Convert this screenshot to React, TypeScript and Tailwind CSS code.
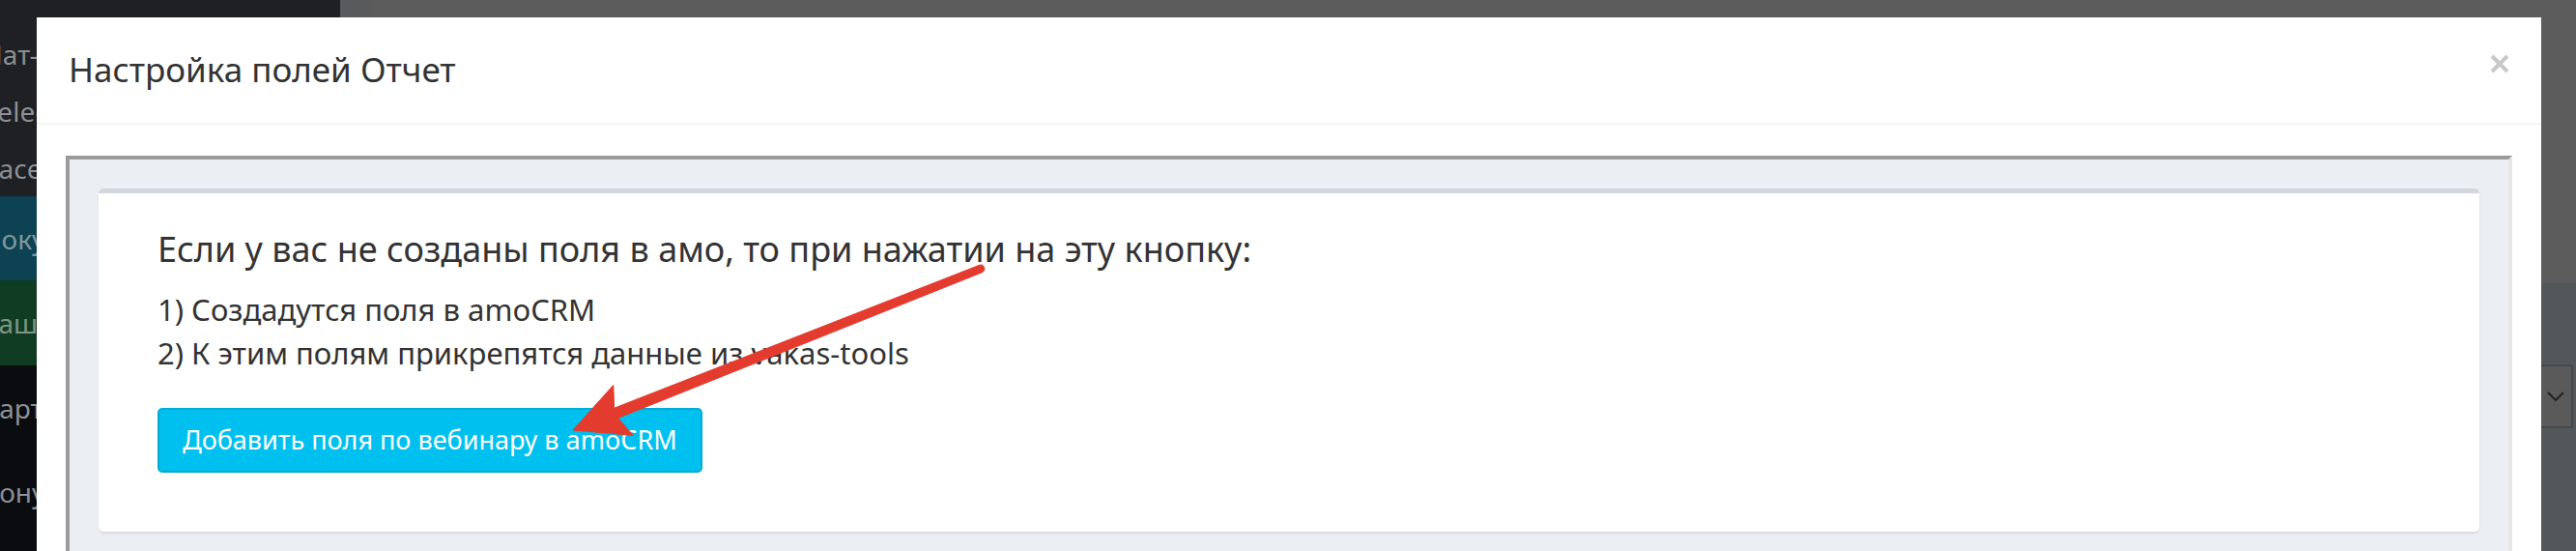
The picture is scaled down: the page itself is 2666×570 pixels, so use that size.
import React from 'react'

const sidebarTop = [
  { label: 'main', shift: '-ml-[2px]' },
  { label: 'Чат-боты', shift: '-ml-[16px]' },
  { label: 'Selector', shift: '-ml-[18px]' },
  { label: 'Facebook', shift: '-ml-[16px]' },
]

function Sidebar() {
  return (
    <aside className="flex w-[352px] shrink-0 flex-col bg-[#1e2024] text-[28px] text-[#8c8f93]">
      <div className="-mt-[33px] flex flex-col">
        {sidebarTop.map((item, i) => (
          <div key={item.label} className={`flex h-[59px] ${i === 0 ? 'items-start' : 'items-center'}`}>
            <span className={`${item.shift} whitespace-nowrap`}>{item.label}</span>
          </div>
        ))}
      </div>
      <div className="flex h-[87px] items-center bg-[#0d4252] text-[#7f98a0]">
        <span className="-ml-[19px] whitespace-nowrap">Покупки</span>
      </div>
      <div className="flex h-[88px] items-center bg-[#0f3c23] text-[#7f9486]">
        <span className="-ml-[22px] whitespace-nowrap">Дашборд</span>
      </div>
      <div className="flex flex-1 flex-col bg-[#0b0c0f]">
        <div className="flex h-[87px] items-center">
          <span className="-ml-[18px] whitespace-nowrap">Карточки</span>
        </div>
        <div className="flex h-[87px] items-center">
          <span className="-ml-[18px] whitespace-nowrap">Бонусы</span>
        </div>
      </div>
    </aside>
  )
}

function Arrow() {
  // annotation arrow drawn over the screenshot
  return (
    <svg
      className="pointer-events-none absolute left-0 top-0"
      width="2666"
      height="570"
      viewBox="0 0 2666 570"
    >
      <path
        d="M593 445 L634.8 398.4 L635.6 422.2 L1013.6 274.3 A4 4 0 0 1 1016.6 281.7 L639.6 432.5 L655.4 450.4 Z"
        fill="#e43b2f"
        stroke="#e43b2f"
        strokeWidth="1"
        strokeLinejoin="round"
      />
    </svg>
  )
}

export default function App() {
  return (
    <div className="relative h-[570px] w-[2666px] overflow-hidden bg-[#5c5c5c] font-['Noto_Sans',sans-serif]">
      <div className="flex h-full">
        <Sidebar />
        <div className="w-[33px] shrink-0 bg-[#595a5c]" />
        <main className="flex flex-1 flex-col">
          <div className="h-[293px] bg-[#5c5c5c]" />
          <div className="flex flex-1 items-start justify-end bg-[#53575a] pr-[3px] pt-[84px]">
            <div className="flex h-[66px] w-[320px] items-center justify-end border-2 border-[#46494b] bg-[#5a5a5a] pr-[7px]">
              <svg width="18" height="10" viewBox="0 0 18 10" fill="none">
                <path d="M1 1 L9 9 L17 1" stroke="#1f2123" strokeWidth="2" />
              </svg>
            </div>
          </div>
        </main>
      </div>

      <div className="absolute left-[38px] top-[18px] h-[600px] w-[2592px] bg-white">
        <div className="flex h-[111px] items-center justify-between border-b-2 border-[#f4f4f4] px-[33px]">
          <h4 className="text-[35px] text-[#333333]">Настройка полей Отчет</h4>
          <button className="mb-[14px] flex h-[20px] w-[20px] items-center justify-center">
            <svg width="20" height="20" viewBox="0 0 20 20">
              <path d="M2 2 L18 18 M18 2 L2 18" stroke="#c8c8c8" strokeWidth="4" />
            </svg>
          </button>
        </div>

        <div className="px-[30px] pt-[32px]">
          <div className="h-[500px] border-4 border-b-[#e6e6e6] border-l-[#9b9b9b] border-r-[#e6e6e6] border-t-[#9b9b9b] bg-[#ebeef2] p-[30px]">
            <div className="flex flex-col rounded-[5px] border-t-[5px] border-[#d2d6de] bg-white pb-[61px] pl-[61px] pt-[38px] shadow-[0_2px_2px_rgba(0,0,0,0.08)]">
              <h4 className="text-[36px] leading-[40px] text-[#333333]">
                Если у вас не созданы поля в амо, то при нажатии на эту кнопку:
              </h4>
              <div className="mt-[20px] text-[31px] leading-[45px] text-[#333333]">
                <p>1) Создадутся поля в amoCRM</p>
                <p>2) К этим полям прикрепятся данные из vakas-tools</p>
              </div>
              <button className="mt-[34px] flex h-[67px] items-center self-start rounded-[5px] border-2 border-[#00acd6] bg-[#00c0ef] px-[24px] text-[27px] text-white">
                Добавить поля по вебинару в amoCRM
              </button>
            </div>
          </div>
        </div>
      </div>

      <Arrow />
    </div>
  )
}
